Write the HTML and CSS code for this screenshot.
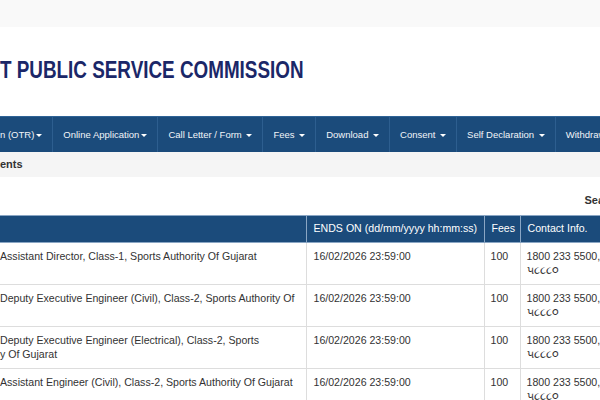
FILE: index.html
```html
<!DOCTYPE html>
<html lang="en">
<head>
<meta charset="UTF-8" />
<title>GPSC - Advertisements</title>
<link rel="stylesheet" href="styles.css">
</head>
<body>

<div class="topbar"></div>

<header class="brand">
  <span class="brand-name">T PUBLIC SERVICE COMMISSION</span>
</header>

<nav class="menu">
  <a class="first">n (OTR)<b class="caret"></b></a>
  <a>Online Application<b class="caret"></b></a>
  <a>Call Letter / Form <b class="caret"></b></a>
  <a>Fees <b class="caret"></b></a>
  <a>Download <b class="caret"></b></a>
  <a>Consent <b class="caret"></b></a>
  <a>Self Declaration <b class="caret"></b></a>
  <a>Withdraw</a>
</nav>

<div class="crumb">ents</div>

<div class="search">Sea</div>

<table class="grid">
  <colgroup>
    <col class="c-post">
    <col class="c-date">
    <col class="c-fees">
    <col class="c-contact">
  </colgroup>
  <thead>
    <tr>
      <th></th>
      <th>ENDS ON (dd/mm/yyyy hh:mm:ss)</th>
      <th>Fees</th>
      <th>Contact Info.</th>
    </tr>
  </thead>
  <tbody>
    <tr>
      <td>Assistant Director, Class-1, Sports Authority Of Gujarat</td>
      <td>16/02/2026 23:59:00</td>
      <td>100</td>
      <td>1800 233 5500,<br>૫૮૮૮૦</td>
    </tr>
    <tr>
      <td>Deputy Executive Engineer (Civil), Class-2, Sports Authority Of</td>
      <td>16/02/2026 23:59:00</td>
      <td>100</td>
      <td>1800 233 5500,<br>૫૮૮૮૦</td>
    </tr>
    <tr>
      <td>Deputy Executive Engineer (Electrical), Class-2, Sports<br>y Of Gujarat</td>
      <td>16/02/2026 23:59:00</td>
      <td>100</td>
      <td>1800 233 5500,<br>૫૮૮૮૦</td>
    </tr>
    <tr>
      <td>Assistant Engineer (Civil), Class-2, Sports Authority Of Gujarat</td>
      <td>16/02/2026 23:59:00</td>
      <td>100</td>
      <td>1800 233 5500,<br>૫૮૮૮૦</td>
    </tr>
  </tbody>
</table>

</body>
</html>
```

FILE: styles.css
```css
body {
  margin: 0;
  width: 600px;
  overflow: hidden;
  font-family: "Liberation Sans", Arial, sans-serif;
  color: #333;
  background: #fff;
}
.topbar {
  height: 27px;
  background: #f9f9f9;
}
.brand {
  height: 89px;
  box-sizing: border-box;
  padding-top: 31px;
}
/* logo lettering is condensed, squeeze the bold sans */
.brand-name {
  display: block;
  font-weight: bold;
  font-size: 23px;
  line-height: 24px;
  color: #1b2768;
  white-space: nowrap;
  transform: scaleX(0.82);
  transform-origin: left center;
}
.menu {
  display: flex;
  height: 36px;
  background: #1b4b7b;
  border-top: 1px solid #2f6396;
  box-sizing: border-box;
  white-space: nowrap;
}
.menu a {
  display: block;
  line-height: 35px;
  padding: 0 10px;
  color: #f2f5f9;
  font-size: 9.5px;
  border-left: 1px solid #2d5e8f;
  flex-shrink: 0;
}
.menu a.first {
  padding-left: 0;
  border-left: none;
}
.caret {
  display: inline-block;
  width: 0;
  height: 0;
  margin-left: 2px;
  vertical-align: middle;
  border-top: 3px solid #fff;
  border-left: 3px solid transparent;
  border-right: 3px solid transparent;
}
.crumb {
  height: 25px;
  line-height: 25px;
  background: #f5f5f5;
  font-size: 11px;
  font-weight: bold;
}
.search {
  height: 38px;
  box-sizing: border-box;
  padding-top: 16px;
  line-height: 14px;
  margin-right: -4px;
  text-align: right;
  font-size: 11px;
  font-weight: bold;
}
.grid {
  width: 720px;
  table-layout: fixed;
  border-collapse: collapse;
  font-size: 10.6px;
  line-height: 14px;
}
.c-post { width: 306px; }
.c-date { width: 178px; }
.c-fees { width: 36px; }
.c-contact { width: 200px; }
.grid th {
  background: #1b4b7b;
  color: #fff;
  font-weight: normal;
  text-align: left;
  white-space: nowrap;
  padding: 5px 6px 7px 7px;
  border: 1px solid #8aa6c4;
}
.grid td {
  padding: 6px 6px 7px 6px;
  vertical-align: top;
  border: 1px solid #ddd;
  white-space: nowrap;
}
.grid td:nth-child(2) {
  padding-left: 7px;
}
.grid th:first-child,
.grid td:first-child {
  padding-left: 0;
  border-left: none;
}
```
